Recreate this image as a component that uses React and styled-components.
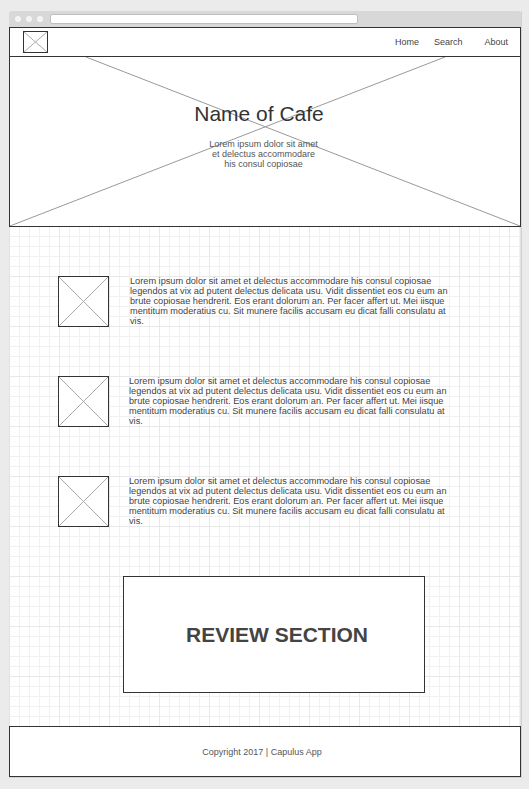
import React from "react";
import styled, { createGlobalStyle } from "styled-components";

const Global = createGlobalStyle`
  html, body { margin: 0; padding: 0; background: #ebebeb; }
  body { font-family: "Liberation Sans", Arial, sans-serif; }
  * { box-sizing: border-box; }
`;

const Window = styled.div`
  margin: 11px 0 0 9px;
  width: 513px;
  border-right: 1px solid #d2d2d2;
  border-bottom: 1px solid #d2d2d2;
  display: flex;
  flex-direction: column;
`;

const TitleBar = styled.div`
  height: 16px;
  background: #d8d8d8;
  border-radius: 3px 3px 0 0;
  display: flex;
  align-items: center;
  padding-left: 6px;
  gap: 5px;
`;

const Dot = styled.span`
  width: 6px;
  height: 6px;
  border-radius: 50%;
  background: #f4f4f4;
`;

const AddressBar = styled.div`
  margin-left: 2px;
  width: 308px;
  height: 10px;
  background: #fff;
  border: 1px solid #bdbdbd;
  border-radius: 2px;
`;

const Header = styled.header`
  height: 30px;
  border: 1px solid #333;
  background: #fff;
  display: flex;
  align-items: center;
  justify-content: space-between;
  padding: 0 12px 0 13px;
`;

const PlaceholderBox = styled.div`
  width: ${(p) => p.$w}px;
  height: ${(p) => p.$h}px;
  border: 1px solid #333;
  background: #fff;
  flex-shrink: 0;
  svg { display: block; width: 100%; height: 100%; }
`;

const Nav = styled.nav`
  display: flex;
  align-items: center;
`;

const NavLink = styled.a`
  font-size: 9px;
  color: #444;
  text-decoration: none;
  margin-left: ${(p) => p.$gap || 0}px;
`;

const Hero = styled.section`
  position: relative;
  height: 170px;
  border: 1px solid #333;
  border-top: none;
  background: #fff;
  display: flex;
  flex-direction: column;
  align-items: center;
  padding-top: 45px;
  overflow: hidden;
`;

const HeroLines = styled.svg`
  position: absolute;
  inset: 0;
  width: 100%;
  height: 100%;
`;

const HeroTitle = styled.h1`
  position: relative;
  margin: 0 12px 0 0;
  font-size: 21px;
  font-weight: normal;
  color: #333;
  line-height: 24px;
`;

const HeroText = styled.p`
  position: relative;
  margin: 13px 3px 0 0;
  width: 112px;
  text-align: center;
  font-size: 9px;
  line-height: 10px;
  color: #555;
`;

const GridSection = styled.main`
  height: 499px;
  border-left: 1px solid #e2e2e2;
  border-right: 1px solid #e2e2e2;
  background-color: #fff;
  background-image:
    linear-gradient(#e8e8e8 1px, transparent 1px),
    linear-gradient(90deg, #e8e8e8 1px, transparent 1px),
    linear-gradient(#f1f1f1 1px, transparent 1px),
    linear-gradient(90deg, #f1f1f1 1px, transparent 1px);
  background-size: 50px 50px, 50px 50px, 10px 10px, 10px 10px;
  background-position: -1px -1px;
  padding: 49px 0 0 48px;
  display: flex;
  flex-direction: column;
  gap: 49px;
`;

const Row = styled.div`
  display: flex;
  align-items: flex-start;
  gap: ${(p) => p.$gap}px;
`;

const RowText = styled.p`
  margin: 0;
  width: 324px;
  font-size: 9.2px;
  line-height: 10px;
  color: #444;
`;

const Review = styled.div`
  margin-left: 65px;
  width: 302px;
  height: 117px;
  border: 1px solid #333;
  background: #fff;
  display: flex;
  align-items: center;
  justify-content: center;
`;

const ReviewTitle = styled.h2`
  margin: 0 0 0 6px;
  font-size: 21px;
  font-weight: bold;
  color: #444;
`;

const Footer = styled.footer`
  height: 51px;
  border: 1px solid #333;
  background: #fff;
  display: flex;
  align-items: center;
  justify-content: center;
  padding-right: 6px;
  font-size: 9px;
  color: #555;
`;

const XIcon = () => (
  <svg viewBox="0 0 100 100" preserveAspectRatio="none">
    <line x1="0" y1="0" x2="100" y2="100" stroke="#aaa" strokeWidth="1" vectorEffect="non-scaling-stroke" />
    <line x1="100" y1="0" x2="0" y2="100" stroke="#aaa" strokeWidth="1" vectorEffect="non-scaling-stroke" />
  </svg>
);

const lorem =
  "Lorem ipsum dolor sit amet et delectus accommodare his consul copiosae legendos at vix ad putent delectus delicata usu. Vidit dissentiet eos cu eum an brute copiosae hendrerit. Eos erant dolorum an. Per facer affert ut. Mei iisque mentitum moderatius cu. Sit munere facilis accusam eu dicat falli consulatu at vis.";

const rows = [21, 20, 20];

export default function App() {
  return (
    <>
      <Global />
      <Window>
        <TitleBar>
          <Dot />
          <Dot />
          <Dot />
          <AddressBar />
        </TitleBar>
        <Header>
          <PlaceholderBox $w={25} $h={22}>
            <XIcon />
          </PlaceholderBox>
          <Nav>
            <NavLink>Home</NavLink>
            <NavLink $gap={15}>Search</NavLink>
            <NavLink $gap={22}>About</NavLink>
          </Nav>
        </Header>
        <Hero>
          <HeroLines viewBox="0 0 510 169" preserveAspectRatio="none">
            <line x1="76" y1="0" x2="510" y2="169" stroke="#999" strokeWidth="1" />
            <line x1="435" y1="0" x2="0" y2="169" stroke="#999" strokeWidth="1" />
          </HeroLines>
          <HeroTitle>Name of Cafe</HeroTitle>
          <HeroText>Lorem ipsum dolor sit amet et delectus accommodare his consul copiosae</HeroText>
        </Hero>
        <GridSection>
          {rows.map((g, i) => (
            <Row key={i} $gap={g}>
              <PlaceholderBox $w={51} $h={51}>
                <XIcon />
              </PlaceholderBox>
              <RowText>{lorem}</RowText>
            </Row>
          ))}
          <Review>
            <ReviewTitle>REVIEW SECTION</ReviewTitle>
          </Review>
        </GridSection>
        <Footer>Copyright 2017 | Capulus App</Footer>
      </Window>
    </>
  );
}
